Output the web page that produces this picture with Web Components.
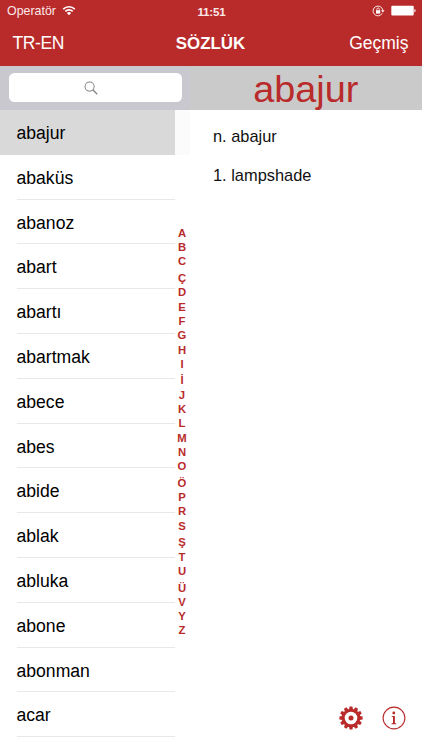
<!DOCTYPE html>
<html lang="tr">
<head>
<meta charset="utf-8">
<title>Sözlük</title>
<style>
  body {
    margin: 0;
    width: 422px;
    height: 750px;
    overflow: hidden;
    background: #fff;
    color: #111;
    font-family: "Liberation Sans", Arial, sans-serif;
    --accent: #b92b2b;
  }
</style>
</head>
<body>
<dictionary-app></dictionary-app>

<script>
class StatusBar extends HTMLElement {
  constructor() {
    super();
    this.shadowDOM = this.attachShadow({mode: 'open'});
  }
  connectedCallback() {
    this.shadowDOM.innerHTML = `
      <style>
        :host {
          display: grid;
          grid-template-columns: 1fr auto 1fr;
          align-items: center;
          height: 22px;
          padding: 0 6px 0 7px;
          box-sizing: border-box;
          color: #f9e9e9;
          font-size: 12.4px;
        }
        .left, .right { display: flex; align-items: center; }
        .left { gap: 6px; }
        .right { justify-content: flex-end; gap: 5px; }
        .time { font-size: 11.6px; font-weight: bold; letter-spacing: -.2px; }
        svg { display: block; position: relative; top: -.5px; }
      </style>
      <div class="left">
        <span><slot name="carrier"></slot></span>
        <svg width="14" height="11" viewBox="0 0 14 11" fill="none" stroke="#fff" stroke-width="1.6">
          <path d="M1.2 4.1a8.2 8.2 0 0 1 11.6 0M3.3 6.4a5.2 5.2 0 0 1 7.4 0"/>
          <path d="M7 10.2 4.9 8a3 3 0 0 1 4.2 0z" fill="#fff" stroke="none"/>
        </svg>
      </div>
      <span class="time"><slot name="time"></slot></span>
      <div class="right">
        <svg width="13" height="12" viewBox="0 0 13 12" fill="none" stroke="#fbe4e4">
          <path d="M10.2 8.4A4.9 4.9 0 1 1 10.8 5.2" stroke-width="1"/>
          <path d="M9 5.2h3.6L10.8 7.4z" fill="#fff" stroke="none"/>
          <rect x="4" y="5.2" width="4.2" height="3.4" fill="#fff" stroke="none"/>
          <path d="M4.8 5.4V4.3a1.3 1.3 0 0 1 2.6 0v1.1" stroke-width=".9"/>
        </svg>
        <svg width="26" height="11" viewBox="0 0 26 11" fill="#fff">
          <rect x="1.3" y=".8" width="22.4" height="9.8" rx="1"/>
          <path d="M24.4 4c1.6.3 1.6 3.1 0 3.4z"/>
        </svg>
      </div>`;
  }
}
customElements.define('status-bar', StatusBar);

class NavBar extends HTMLElement {
  constructor() {
    super();
    this.shadowDOM = this.attachShadow({mode: 'open'});
  }
  connectedCallback() {
    this.shadowDOM.innerHTML = `
      <style>
        :host {
          display: grid;
          grid-template-columns: 1fr auto 1fr;
          align-items: center;
          height: 43.5px;
          padding: 0 13.5px 0 12.5px;
          box-sizing: border-box;
          color: #fff;
          font-size: 17.5px;
        }
        .left { letter-spacing: -.4px; }
        .title { font-size: 16.9px; font-weight: bold; }
        .right { text-align: right; }
      </style>
      <span class="left"><slot name="left"></slot></span>
      <span class="title"><slot></slot></span>
      <span class="right"><slot name="right"></slot></span>`;
  }
}
customElements.define('nav-bar', NavBar);

class SearchBar extends HTMLElement {
  constructor() {
    super();
    this.shadowDOM = this.attachShadow({mode: 'open'});
  }
  connectedCallback() {
    this.shadowDOM.innerHTML = `
      <style>
        :host {
          display: block;
          height: 44.5px;
          padding: 7.5px 7.5px 0 8.5px;
          box-sizing: border-box;
          background: #c9c8cf;
        }
        .field {
          display: flex;
          align-items: center;
          justify-content: center;
          height: 29px;
          padding-right: 8px;
          box-sizing: border-box;
          border-radius: 5.5px;
          background: #fff;
        }
      </style>
      <div class="field">
        <svg width="14" height="14" viewBox="0 0 15 15" fill="none" stroke="#86868a">
          <circle cx="6" cy="6" r="4.9" stroke-width="1.1"/>
          <path d="m9.5 9.5 4.6 4.6" stroke-width="1.5"/>
        </svg>
      </div>`;
  }
}
customElements.define('search-bar', SearchBar);

class WordItem extends HTMLElement {
  constructor() {
    super();
    this.shadowDOM = this.attachShadow({mode: 'open'});
  }
  connectedCallback() {
    this.shadowDOM.innerHTML = `
      <style>
        :host {
          display: block;
          height: 44.8px;
          padding-left: 16.5px;
          box-sizing: border-box;
          font-size: 17.6px;
          color: #000;
        }
        :host([selected]) { background: #d9d9d9; }
        .label {
          height: 100%;
          box-sizing: border-box;
          border-bottom: 1px solid #e8e8ea;
          line-height: 46.6px;
        }
        :host([selected]) .label { border-color: transparent; }
      </style>
      <div class="label"><slot></slot></div>`;
  }
}
customElements.define('word-item', WordItem);

class WordList extends HTMLElement {
  constructor() {
    super();
    this.shadowDOM = this.attachShadow({mode: 'open'});
  }
  set words(words) {
    this._words = words;
    this.render();
  }
  render() {
    this.shadowDOM.innerHTML = `
      <style>
        :host { display: block; width: 174.5px; }
      </style>`;
    this._words.forEach((word, i) => {
      const item = document.createElement('word-item');
      item.textContent = word;
      item.toggleAttribute('selected', i === 0);
      this.shadowDOM.appendChild(item);
    });
  }
}
customElements.define('word-list', WordList);

class LetterIndex extends HTMLElement {
  constructor() {
    super();
    this.shadowDOM = this.attachShadow({mode: 'open'});
  }
  set letters(letters) {
    this._letters = letters;
    this.render();
  }
  render() {
    this.shadowDOM.innerHTML = `
      <style>
        :host {
          display: flex;
          flex-direction: column;
          align-items: center;
          width: 15px;
          padding-top: 115.9px;
          background: linear-gradient(#fbfbfb 44.8px, transparent 0);
          color: var(--accent);
          font-size: 11.3px;
          font-weight: bold;
          line-height: 14.3px;
        }
        /* accented capitals are taller than the plain ones */
        .tall { padding-top: 2.3px; }
      </style>`;
    this._letters.forEach(letter => {
      const span = document.createElement('span');
      span.textContent = letter;
      if ('ÇİÖŞÜ'.includes(letter)) span.className = 'tall';
      this.shadowDOM.appendChild(span);
    });
  }
}
customElements.define('letter-index', LetterIndex);

class WordDetail extends HTMLElement {
  constructor() {
    super();
    this.shadowDOM = this.attachShadow({mode: 'open'});
  }
  connectedCallback() {
    this.shadowDOM.innerHTML = `
      <style>
        :host { display: flex; flex-direction: column; }
        .word {
          height: 44.5px;
          line-height: 46px;
          background: #cacaca;
          color: var(--accent);
          font-size: 37.8px;
          text-align: center;
        }
        .meaning {
          flex: 1;
          padding: 17px 0 0 23.5px;
          font-size: 16.4px;
          line-height: 19.5px;
        }
        ::slotted(p) { margin: 0 0 19.5px; }
      </style>
      <div class="word"><slot name="word"></slot></div>
      <div class="meaning"><slot></slot></div>
      <slot name="actions"></slot>`;
  }
}
customElements.define('word-detail', WordDetail);

class ActionIcons extends HTMLElement {
  constructor() {
    super();
    this.shadowDOM = this.attachShadow({mode: 'open'});
  }
  connectedCallback() {
    const teeth = Array.from({length: 12}, (_, i) =>
      `<path d="M-2-8.5-1.4-11.6h2.8L2-8.5z" transform="rotate(${i * 30})"/>`).join('');
    this.shadowDOM.innerHTML = `
      <style>
        :host {
          display: flex;
          justify-content: flex-end;
          gap: 19.5px;
          padding: 0 16px 20px 0;
          color: var(--accent);
        }
      </style>
      <svg width="24" height="24" viewBox="-12 -12 24 24" fill="currentColor">
        ${teeth}
        <circle r="7.8" fill="none" stroke="currentColor" stroke-width="3"/>
        <circle r="2.5"/>
      </svg>
      <svg width="24" height="24" viewBox="-12 -12 24 24" fill="currentColor">
        <circle r="10.9" fill="none" stroke="currentColor" stroke-width="1.1"/>
        <circle cx="-.2" cy="-5" r="1.4"/>
        <path d="M-2.3-2.1H.9V5.1l1.4.3V6.2h-4.8V5.4l1.5-.3v-6.1l-1.3-.3z"/>
      </svg>`;
  }
}
customElements.define('action-icons', ActionIcons);

class DictionaryApp extends HTMLElement {
  constructor() {
    super();
    this.shadowDOM = this.attachShadow({mode: 'open'});
  }
  connectedCallback() {
    this.shadowDOM.innerHTML = `
      <style>
        :host {
          display: flex;
          flex-direction: column;
          height: 750px;
        }
        header { background: var(--accent); }
        main {
          flex: 1;
          display: flex;
          min-height: 0;
        }
        .side { width: 189.5px; }
        .columns { display: flex; }
        word-detail { flex: 1; }
      </style>
      <header>
        <status-bar>
          <span slot="carrier">Operatör</span>
          <span slot="time">11:51</span>
        </status-bar>
        <nav-bar>
          <span slot="left">TR-EN</span>
          SÖZLÜK
          <span slot="right">Geçmiş</span>
        </nav-bar>
      </header>
      <main>
        <div class="side">
          <search-bar></search-bar>
          <div class="columns">
            <word-list></word-list>
            <letter-index></letter-index>
          </div>
        </div>
        <word-detail>
          <span slot="word">abajur</span>
          <p>n. abajur</p>
          <p>1. lampshade</p>
          <action-icons slot="actions"></action-icons>
        </word-detail>
      </main>`;
    this.shadowDOM.querySelector('word-list').words = [
      'abajur', 'abaküs', 'abanoz', 'abart', 'abartı', 'abartmak', 'abece',
      'abes', 'abide', 'ablak', 'abluka', 'abone', 'abonman', 'acar'
    ];
    this.shadowDOM.querySelector('letter-index').letters = [...'ABCÇDEFGHIİJKLMNOÖPRSŞTUÜVYZ'];
  }
}
customElements.define('dictionary-app', DictionaryApp);
</script>
</body>
</html>
